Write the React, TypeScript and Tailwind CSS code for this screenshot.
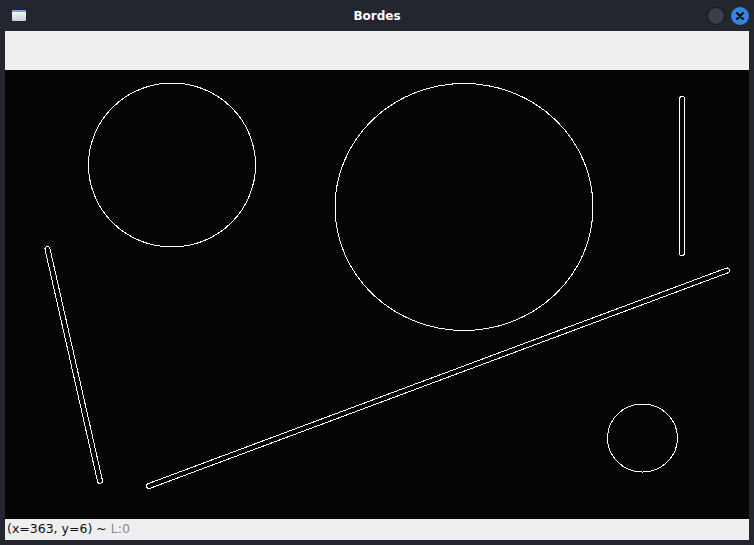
import React from "react";

function Capsule({ x1, y1, x2, y2, w }: { x1: number; y1: number; x2: number; y2: number; w: number }) {
  const dx = x2 - x1;
  const dy = y2 - y1;
  const len = Math.sqrt(dx * dx + dy * dy);
  const ang = (Math.atan2(dy, dx) * 180) / Math.PI;
  return (
    <rect
      x={-w / 2}
      y={-w / 2}
      width={len + w}
      height={w}
      rx={w / 2}
      transform={`translate(${x1} ${y1}) rotate(${ang})`}
      fill="none"
      stroke="white"
      strokeWidth={1}
    />
  );
}

export default function App() {
  return (
    <div className="w-[754px] h-[545px] bg-[#23262e] flex flex-col overflow-hidden" style={{ fontFamily: '"DejaVu Sans", sans-serif' }}>
      <div className="h-[31px] flex items-center relative shrink-0">
        <div className="ml-[12px] w-[14px] h-[11px] rounded-[1px] bg-gradient-to-b from-[#f4f4f4] to-[#cfcfcf] border-t-2 border-[#7aa0d8]" />
        <div className="absolute left-0 right-0 top-0 h-[31px] flex items-center justify-center text-white text-[12px] font-bold">Bordes</div>
        <div className="ml-auto mr-[5px] flex items-center gap-[6px]">
          <div className="w-[18px] h-[18px] rounded-full bg-[#3b3e4a] border border-[#15171c]" />
          <div className="w-[18px] h-[18px] rounded-full bg-[#3584e4] flex items-center justify-center">
            <svg width="10" height="10" viewBox="0 0 10 10">
              <path d="M2 2 L8 8 M8 2 L2 8" stroke="#111" strokeWidth="2.2" strokeLinecap="round" />
            </svg>
          </div>
        </div>
      </div>
      <div className="flex-1 mx-[5px] mb-[5px] flex flex-col">
        <div className="h-[39px] bg-[#efefef] shrink-0" />
        <div className="h-[449px] bg-[#050505] shrink-0">
          <svg width="744" height="449" viewBox="0 0 744 449" shapeRendering="crispEdges">
            <ellipse cx={167} cy={95} rx={83.5} ry={82} fill="none" stroke="white" strokeWidth={1} />
            <ellipse cx={459} cy={137} rx={129} ry={123.5} fill="none" stroke="white" strokeWidth={1} />
            <ellipse cx={637.5} cy={368} rx={35} ry={34} fill="none" stroke="white" strokeWidth={1} />
            <rect x={674.5} y={26.5} width={5} height={159} rx={2.5} fill="none" stroke="white" strokeWidth={1} />
            <Capsule x1={42.5} y1={179} x2={95} y2={411} w={5} />
            <Capsule x1={144} y1={416} x2={722} y2={200.5} w={5} />
          </svg>
        </div>
        <div className="flex-1 bg-[#efefef] flex items-center pl-[2px] text-[12.5px] leading-none">
          <span className="text-[#111]">(x=363, y=6) ~</span>
          <span className="text-[#8a8a8a] ml-[4px]">L:0</span>
        </div>
      </div>
    </div>
  );
}
